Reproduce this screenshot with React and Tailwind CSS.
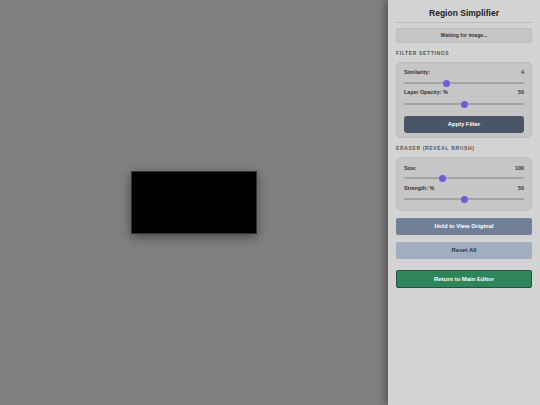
import React from 'react';

function Slider({ value }) {
  return (
    <div className="relative h-[10px] flex items-center">
      <div className="w-full h-[2px] rounded-full bg-[#a3a3a3]" />
      <div
        className="absolute top-1/2 w-[7px] h-[7px] -mt-[3.5px] -ml-[3.5px] rounded-full bg-[#6a5fd6]"
        style={{ left: `${value * 100}%` }}
      />
    </div>
  );
}

function Row({ label, value }) {
  return (
    <div className="flex justify-between h-[8px] leading-[8px] text-[5.4px] font-bold text-[#333]">
      <span>{label}</span>
      <span>{value}</span>
    </div>
  );
}

export default function App() {
  return (
    <div className="flex w-[540px] h-[405px] overflow-hidden" style={{ fontFamily: '"Liberation Sans", Arial, sans-serif' }}>
      {/* canvas area */}
      <div className="flex-1 bg-[#808080] flex items-center justify-center">
        <div className="w-[126px] h-[63px] bg-black border border-[#333] shadow-[0_3px_10px_rgba(0,0,0,0.45)]" />
      </div>

      {/* sidebar */}
      <div className="w-[152px] h-full bg-[#d3d3d3] px-[8px] shadow-[-3px_0_8px_rgba(0,0,0,0.35)] z-10">
        <div className="pt-[6px] pb-[2px] border-b border-[#bcbcbc]">
          <h1 className="h-[14px] leading-[14px] text-center text-[8.5px] font-bold text-[#222]">Region Simplifier</h1>
        </div>

        <div className="mt-[5px] h-[15px] flex items-center justify-center bg-[#c6c6c6] border border-[#bdbdbd] rounded-[2px] text-[5.1px] font-bold text-[#333]">
          Waiting for image...
        </div>

        <div className="mt-[6px] h-[8px] leading-[8px] text-[5px] font-bold tracking-[0.65px] text-[#555]">FILTER SETTINGS</div>

        <div className="mt-[5px] h-[76px] bg-[#c6c6c6] border border-[#bdbdbd] rounded-[5px] px-[7px] pt-[5px]">
          <Row label="Similarity:" value="4" />
          <div className="mt-[2px]"><Slider value={0.35} /></div>
          <Row label="Layer Opacity: %" value="50" />
          <div className="mt-[3px]"><Slider value={0.5} /></div>
          <button className="mt-[3px] w-full h-[17px] bg-[#4a5568] rounded-[3px] text-white text-[5.9px] font-bold">Apply Filter</button>
        </div>

        <div className="mt-[6px] h-[8px] leading-[8px] text-[5px] font-bold tracking-[0.65px] text-[#555]">ERASER (REVEAL BRUSH)</div>

        <div className="mt-[5px] h-[54px] bg-[#c6c6c6] border border-[#bdbdbd] rounded-[5px] px-[7px] pt-[6px]">
          <Row label="Size:" value="100" />
          <div className="mt-[1px]"><Slider value={0.32} /></div>
          <div className="mt-[1px]"><Row label="Strength: %" value="50" /></div>
          <div className="mt-[2px]"><Slider value={0.5} /></div>
        </div>

        <button className="mt-[7px] w-full h-[17px] bg-[#718096] rounded-[2px] text-white text-[5.9px] font-bold">Hold to View Original</button>
        <button className="mt-[7px] w-full h-[17px] bg-[#a0aec0] rounded-[2px] text-[#2d3748] text-[5.9px] font-bold">Reset All</button>
        <button className="mt-[11px] w-full h-[18px] bg-[#2f855a] border border-[#22543d] rounded-[2px] text-white text-[5.9px] font-bold">Return to Main Editor</button>
      </div>
    </div>
  );
}
